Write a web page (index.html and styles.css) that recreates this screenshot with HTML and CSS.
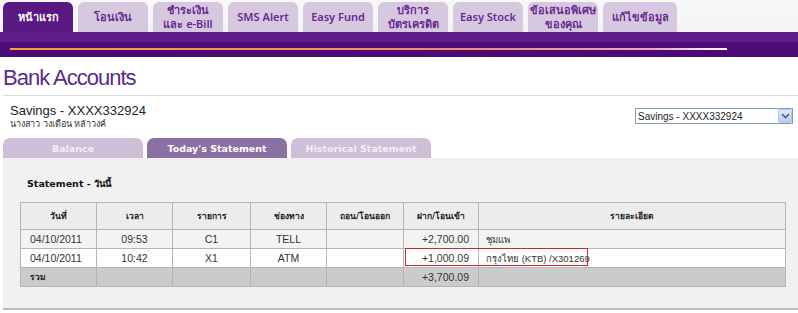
FILE: index.html
```html
<!doctype html>
<html>
  <head>
    <meta charset='utf-8'>
    <title>Bank Accounts</title>
    <link rel="stylesheet" href="styles.css">
  </head>
  <body>

    <div class="topnav">
      <ul class="tabs">
        <li class="active">หน้าแรก</li>
        <li>โอนเงิน</li>
        <li>ชำระเงิน<br>และ e-Bill</li>
        <li>SMS Alert</li>
        <li>Easy Fund</li>
        <li>บริการ<br>บัตรเครดิต</li>
        <li>Easy Stock</li>
        <li>ข้อเสนอพิเศษ<br>ของคุณ</li>
        <li class="wide">แก้ไขข้อมูล</li>
      </ul>
      <div class="bar">
        <div class="bar-line"></div>
      </div>
    </div>

    <h1>Bank Accounts</h1>

    <div class="account">
      <div class="account-info">
        <div class="account-no">Savings - XXXX332924</div>
        <div class="account-name">นางสาว วงเดือน หล้าวงค์</div>
      </div>
      <div class="select-box">
        <select class="account-select">
          <option>Savings - XXXX332924</option>
        </select>
        <span class="select-arrow">
          <svg width="9" height="6" viewBox="0 0 9 6"><path d="M1 1 L4.5 4.5 L8 1" fill="none" stroke="#4d6185" stroke-width="1.6"/></svg>
        </span>
      </div>
    </div>

    <div class="subtabs">
      <div class="subtab">Balance</div>
      <div class="subtab current">Today's Statement</div>
      <div class="subtab">Historical Statement</div>
    </div>

    <div class="panel">
      <h3>Statement - วันนี้</h3>
      <div class="table-wrap">
        <table class="statement">
          <tr class="head">
            <th class="c-date">วันที่</th>
            <th class="c-time">เวลา</th>
            <th class="c-code">รายการ</th>
            <th class="c-chan">ช่องทาง</th>
            <th class="c-out">ถอน/โอนออก</th>
            <th class="c-in">ฝาก/โอนเข้า</th>
            <th>รายละเอียด</th>
          </tr>
          <tr class="odd">
            <td>04/10/2011</td>
            <td class="mid">09:53</td>
            <td class="mid">C1</td>
            <td class="mid">TELL</td>
            <td></td>
            <td class="num">+2,700.00</td>
            <td class="detail">ชุมแพ</td>
          </tr>
          <tr>
            <td>04/10/2011</td>
            <td class="mid">10:42</td>
            <td class="mid">X1</td>
            <td class="mid">ATM</td>
            <td></td>
            <td class="num">+1,000.09</td>
            <td class="detail">กรุงไทย (KTB) /X301269</td>
          </tr>
          <tr class="total">
            <td class="label">รวม</td>
            <td></td>
            <td></td>
            <td></td>
            <td></td>
            <td class="num">+3,700.09</td>
            <td></td>
          </tr>
        </table>
        <div class="mark"></div>
      </div>
    </div>

  </body>
</html>
```

FILE: styles.css
```css
body {
  margin: 0;
  background: #fff;
  font-family: 'Liberation Sans', Arial, sans-serif;
  color: #222;
}

/* top navigation */
.topnav {
  background: linear-gradient(#f8f8f8, #f0f0f0);
}
.tabs {
  display: flex;
  gap: 5px;
  margin: 0;
  padding: 2px 0 0 3px;
  list-style: none;
}
.tabs li {
  width: 70px;
  height: 30px;
  display: flex;
  align-items: center;
  justify-content: center;
  text-align: center;
  border-radius: 6px 6px 0 0;
  background: #d6c8df;
  color: #6b2b91;
  font-family: 'Noto Sans', 'Liberation Sans', sans-serif;
  font-size: 11px;
  font-weight: 600;
  line-height: 14px;
}
.tabs li.active {
  background: #5a1882;
  color: #fff;
}
.tabs li.wide {
  width: 74px;
}
.bar {
  height: 25px;
  background: linear-gradient(#5f1d8a 0, #5f1d8a 40%, #4c0b74 40%, #4c0b74 100%);
  overflow: hidden;
}
.bar-line {
  margin: 16px 0 0 10px;
  width: 717px;
  height: 2px;
  background: linear-gradient(90deg, #f2a23d, #ec8e6a 60%, #e7a7c6 90%, #fff);
}

h1 {
  margin: 7px 0 0 3px;
  font-size: 22px;
  font-weight: normal;
  line-height: 28px;
  letter-spacing: -1px;
  color: #5b2b84;
  padding-bottom: 3px;
  border-bottom: 1px solid #dcdcdc;
}

/* account header */
.account {
  display: flex;
  justify-content: space-between;
  align-items: flex-start;
  padding: 7px 5px 0 10px;
  height: 35px;
}
.account-no {
  font-size: 13px;
  line-height: 16px;
}
.account-name {
  font-size: 9px;
  line-height: 11px;
  color: #333;
}
.select-box {
  position: relative;
  margin-top: 5px;
}
.account-select {
  display: block;
  width: 158px;
  height: 16px;
  font-family: 'Liberation Sans', Arial, sans-serif;
  font-size: 10px;
  color: #222;
  border: 1px solid #7f9db9;
  background: #fff;
  padding: 0 2px;
  appearance: none;
  -webkit-appearance: none;
  border-radius: 0;
}
.select-arrow {
  position: absolute;
  right: 1px;
  top: 1px;
  width: 14px;
  height: 14px;
  display: flex;
  align-items: center;
  justify-content: center;
  background: linear-gradient(#dfe9fb, #b9cdf1);
  border: 1px solid #b4c8ee;
  box-sizing: border-box;
  border-radius: 2px;
}

/* statement tabs */
.subtabs {
  display: flex;
  gap: 4px;
  padding-left: 3px;
}
.subtab {
  width: 140px;
  height: 20px;
  line-height: 21px;
  text-align: center;
  border-radius: 7px 7px 0 0;
  background: #cdbfd8;
  color: #f3eef6;
  font-family: 'DejaVu Sans', Verdana, sans-serif;
  font-size: 9.5px;
  font-weight: bold;
}
.subtab.current {
  background: #8b70a3;
  color: #fff;
}

.panel {
  margin-left: 3px;
  height: 152px;
  padding: 19px 12px 0 17px;
  background: #f1f1f1;
  border-bottom: 2px solid #bdbdbd;
  box-sizing: border-box;
}
.panel h3 {
  margin: 0 0 0 7px;
  font-family: 'DejaVu Sans', Verdana, sans-serif;
  font-size: 9.5px;
  line-height: 14px;
  color: #111;
}

.table-wrap {
  position: relative;
  margin-top: 11px;
  width: 766px;
}
.statement {
  width: 766px;
  border-collapse: collapse;
  border: 1px solid #8d8d8d;
  font-size: 10.5px;
  color: #333;
}
.statement th,
.statement td {
  border: 1px solid #b5b5b5;
  padding: 0 9px;
  height: 18px;
  text-align: left;
}
.statement th {
  height: 26px;
  background: #ececec;
  text-align: center;
  font-family: 'DejaVu Sans', Verdana, sans-serif;
  font-size: 8.5px;
  color: #222;
}
.c-date, .c-time, .c-chan { width: 57px; }
.c-code { width: 59px; }
.c-out { width: 58px; }
.c-in { width: 56px; }
.statement td {
  background: #fff;
}
.statement tr.odd td {
  background: #f3f3f3;
}
.statement td.mid {
  text-align: center;
}
.statement td.num {
  text-align: right;
}
.statement td.detail {
  padding-left: 7px;
  font-size: 9.5px;
}
.statement tr.total td {
  background: #cbcbcb;
}
.statement td.label {
  font-weight: bold;
  font-size: 8.5px;
  color: #222;
}

/* red highlight drawn over the ATM row */
.mark {
  position: absolute;
  left: 385px;
  top: 46px;
  width: 181px;
  height: 16px;
  border: 1.5px solid #c42a30;
}
```
